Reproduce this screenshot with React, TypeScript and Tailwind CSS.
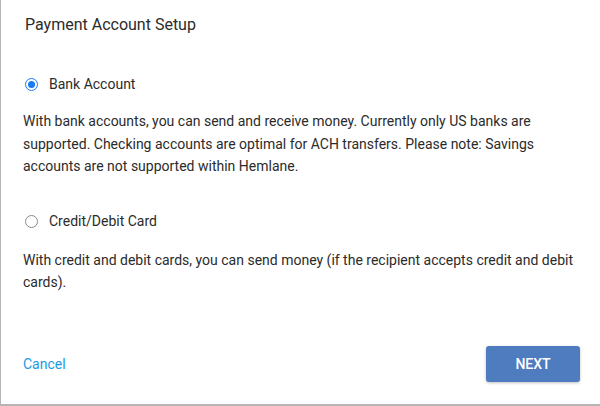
import { useState } from "react";

// ── Radio ──────────────────────────────────────────────────────────────────────

function Radio({ checked, label, onClick }: { checked: boolean; label: string; onClick: () => void }) {
  return (
    <button onClick={onClick} className="flex items-center gap-[11px] text-[14px] text-[#2b2b2b]">
      <span
        className={`w-[13px] h-[13px] rounded-full flex items-center justify-center border ${
          checked ? "border-[#1b7cf2] border-[1.5px]" : "border-[#8a8a8a]"
        }`}
      >
        {checked && <span className="w-[7px] h-[7px] rounded-full bg-[#1b7cf2]" />}
      </span>
      {label}
    </button>
  );
}

// ── App ────────────────────────────────────────────────────────────────────────

export default function App() {
  const [method, setMethod] = useState<"bank" | "card">("bank");

  return (
    <div className="w-[600px] h-[406px] bg-[#b5b5b5] font-['Roboto',sans-serif]">
      <div className="ml-px w-[599px] h-[404px] bg-white flex flex-col pl-[22px] pr-[20px]">
        <h1 className="pt-[13px] pl-[2px] text-[16px] text-[#2b2b2b] font-normal">Payment Account Setup</h1>

        <div className="mt-[37px] pl-[2px]">
          <Radio checked={method === "bank"} label="Bank Account" onClick={() => setMethod("bank")} />
        </div>
        <p className="mt-[15px] text-[14px] leading-[22.5px] text-[#2b2b2b]">
          With bank accounts, you can send and receive money. Currently only US banks are supported. Checking
          accounts are optimal for ACH transfers. Please note: Savings accounts are not supported within Hemlane.
        </p>

        <div className="mt-[33px] pl-[2px]">
          <Radio checked={method === "card"} label="Credit/Debit Card" onClick={() => setMethod("card")} />
        </div>
        <p className="mt-[17px] text-[14px] leading-[22.5px] text-[#2b2b2b]">
          With credit and debit cards, you can send money (if the recipient accepts credit and debit cards).
        </p>

        <div className="mt-auto mb-[22px] flex items-center justify-between">
          <button className="text-[14px] text-[#1a9be2]">Cancel</button>
          <button className="w-[94px] h-[36px] rounded-[3px] bg-[#4f7bbf] text-white text-[14px] font-medium shadow-[0_1px_3px_rgba(0,0,0,0.25)]">
            NEXT
          </button>
        </div>
      </div>
    </div>
  );
}
